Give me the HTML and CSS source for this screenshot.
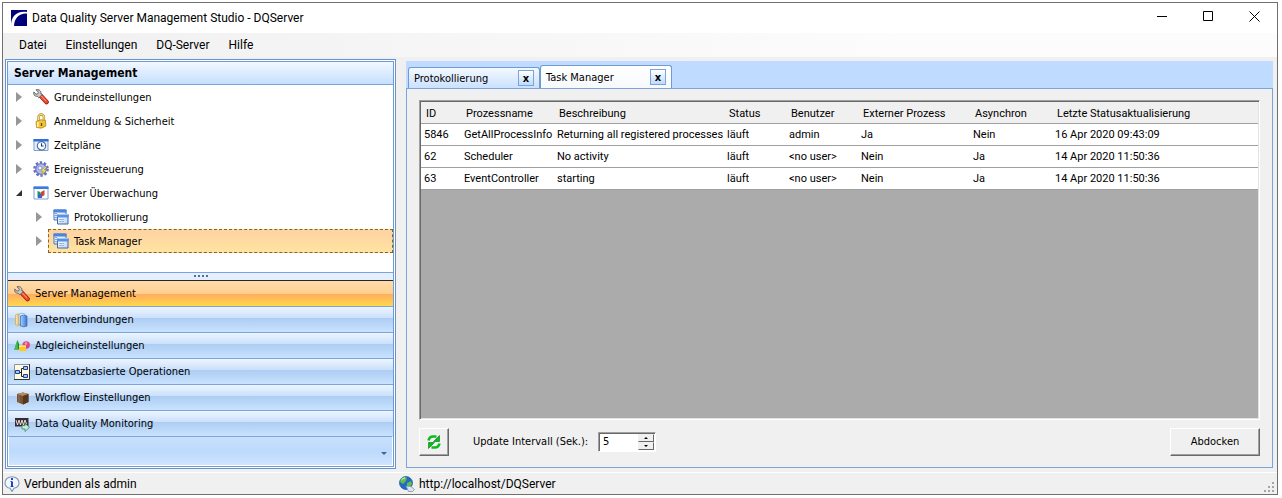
FILE: index.html
```html
<!DOCTYPE html>
<html lang="de">
<head>
    <meta charset="UTF-8">
    <title>Data Quality Server Management Studio - DQServer</title>
    <link rel="stylesheet" href="styles.css">
</head>
<body>
    <svg width="0" height="0" class="defs" aria-hidden="true">
        <defs>
            <linearGradient id="blueBar" x1="0" x2="1" y1="0" y2="0"><stop offset="0" stop-color="#a9cdf8"/><stop offset="1" stop-color="#3b78cf"/></linearGradient>
            <linearGradient id="goldBar" x1="0" x2="1" y1="0" y2="0"><stop offset="0" stop-color="#fff0b0"/><stop offset="1" stop-color="#dba63a"/></linearGradient>
            <linearGradient id="paneFill" x1="0" x2="1" y1="0" y2="1"><stop offset="0" stop-color="#fff"/><stop offset="1" stop-color="#bcd4f6"/></linearGradient>
            <symbol id="i-wrench" viewBox="0 0 16 16">
                <path d="M7.500 6.500l6 6.500" stroke="#8e1c10" stroke-width="4.600" stroke-linecap="round"/>
                <path d="M7.800 6.800l5.600 6" stroke="#ef4a34" stroke-width="3.200" stroke-linecap="round"/>
                <path d="M8 6.500l5 5.400" stroke="#ffa393" stroke-width="1"/>
                <path d="M3 .8l2.400 2.400-.6 1.600-1.800.4L.8 3C.2 5.800 1.800 7.600 4.300 7.300l1.500 1.500 3.200-3-1.200-1.500C8.300 1.800 6 0 3 .8z" fill="#c9c9c9" stroke="#5d5d5d" stroke-width=".9"/>
            </symbol>
            <symbol id="i-lock" viewBox="0 0 16 16">
                <path d="M5.500 8V4.500a2.700 3 0 0 1 5.400 0V8" fill="none" stroke="#b08a24" stroke-width="2.400"/>
                <path d="M5.500 8V4.500a2.700 3 0 0 1 5.400 0V8" fill="none" stroke="#f8e08a" stroke-width="1.100"/>
                <path d="M3 8.500Q8 5.500 12.500 7.500l.3 5.500Q9 16.500 3.500 14.500z" fill="#f0c43a" stroke="#b5861a" stroke-width=".8"/>
                <path d="M4.800 9v5" stroke="#fff0a8" stroke-width="1.600"/>
                <path d="M8.500 10v3" stroke="#6b4a08" stroke-width="1.300"/>
            </symbol>
            <symbol id="i-clock" viewBox="0 0 16 16">
                <path d="M1 2.500h14v11H1z" fill="#e6effc" stroke="#7e9fd4"/>
                <path d="M.5 2h15v2.500H.5z" fill="#2f6fd6"/>
                <circle cx="8.500" cy="8.800" r="4.200" fill="#fff" stroke="#4a6fa5" stroke-width="1.200"/>
                <path d="M8.500 6.200v2.800h2.200" fill="none" stroke="#1d3b70" stroke-width="1.100"/>
            </symbol>
            <symbol id="i-gear" viewBox="0 0 16 16">
                <circle cx="8" cy="8" r="6.500" fill="none" stroke="#6670bd" stroke-width="2.600" stroke-dasharray="2.400 1.684"/>
                <circle cx="8" cy="8" r="5.300" fill="#b4bbf0" stroke="#6d78c8" stroke-width="1.300"/>
                <circle cx="7" cy="7" r="2" fill="#f3f4ff" stroke="#7780c4" stroke-width=".8"/>
                <path d="M12 5.500L8 10.500h2.400L8 15l5.500-6H11l3-3.500z" fill="#ffec4a" stroke="#8a8a48" stroke-width=".5"/>
            </symbol>
            <symbol id="i-monitor" viewBox="0 0 16 16">
                <path d="M1 2h14v12H1z" fill="#fff" stroke="#7e9fd4"/>
                <path d="M.5 1.500h15v2.500H.5z" fill="#3b7ce0"/>
                <path d="M4.500 6l3 1v5.500h-3z" fill="#1f9e52"/><path d="M5 10l4-2.500V13H5z" fill="#2f66cf"/><path d="M8 7l3.500-2v5L8.500 12z" fill="#d8402c"/>
            </symbol>
            <symbol id="i-windows" viewBox="0 0 16 16">
                <path d="M1 1h12v10H1z" fill="url(#paneFill)" stroke="#4676bd"/><path d="M.5.5h13V3.500H.5z" fill="#4c86dc"/>
                <path d="M2 4.500h2M2 6.500h2M2 8.500h2" stroke="#86a5d4"/>
                <path d="M4.500 5.500H15V15H4.500z" fill="url(#paneFill)" stroke="#3d69ad"/><path d="M4 5h11.500v3.500H4z" fill="#5b92e0"/>
                <path d="M4.500 5.500H15" stroke="#a9c9f5"/>
                <path d="M6 10.500h5M6 12.500h5" stroke="#9db8e0"/>
            </symbol>
            <symbol id="i-database" viewBox="0 0 16 16">
                <path d="M1.500 3q2.500-2 5 0v9.500q-2.500 1.800-5 0z" fill="url(#goldBar)" stroke="#c9972e" stroke-width=".6"/>
                <path d="M5 2q3-1.500 6 0v10q-2 1.500-6 0z" fill="#d4e6fc" stroke="#6f9ed8" stroke-width=".6"/>
                <path d="M6.500 4q3-1.600 6.500 0v10q-3 1.600-6.500 0z" fill="url(#blueBar)" stroke="#3568b5" stroke-width=".7"/>
            </symbol>
            <symbol id="i-shapes" viewBox="0 0 16 16">
                <path d="M3.500 2L7 11.500H.3z" fill="#168a2c"/><path d="M3.500 2L4 11.500H.3z" fill="#3cbf55"/>
                <circle cx="12.200" cy="7" r="3.700" fill="#e0457a"/><circle cx="12" cy="5.500" r="1.400" fill="#f58bb0"/>
                <path d="M5 7.500h7V13H5z" fill="#ffc81e"/><path d="M5 7.500h7V9H5z" fill="#ffe680"/>
            </symbol>
            <symbol id="i-tree" viewBox="0 0 16 16">
                <path d="M.5.5h15v15H.5z" fill="#fffbe0" stroke="#8a93a8"/>
                <path d="M15.500 0v15.500H0" fill="none" stroke="#333"/>
                <path d="M5.500 8.500h2M7.500 4.500v8M7.500 4.500h2M7.500 12.500h2" fill="none" stroke="#222"/>
                <path d="M1.500 6.500h4v3h-4zM9.500 2.500h4v3h-4zM9.500 10.500h4v3h-4z" fill="#a9c6f5" stroke="#1f3f94"/>
            </symbol>
            <symbol id="i-box" viewBox="0 0 16 16">
                <path d="M3 4l6-1.500 5.500 1.500v8L9 14.500 3 12z" fill="#7a5234"/>
                <path d="M3 4l6-1.500 5.500 1.500L9 6z" fill="#b58c62"/><path d="M9 6l5.500-2v8L9 14.500z" fill="#553620"/>
                <path d="M5 5v7" stroke="#966c48" stroke-width="1.200"/>
            </symbol>
            <symbol id="i-quality" viewBox="0 0 16 16">
                <path d="M1 2h13.500v8.500H1z" fill="#3a2a2e"/>
                <path d="M2 4l1.500 5L5 4l1.500 5L8 4l1.500 5L11 4l1.500 4" fill="none" stroke="#eee" stroke-width=".9"/>
                <path d="M8 9.500h3V7.500l4.500 3.800-4.500 4.200v-2.500H8z" fill="#c4ead6" stroke="#3e8a62" stroke-width=".8"/>
            </symbol>
            <symbol id="i-info" viewBox="0 0 16 16">
                <path d="M8 .8c4 0 7 2.500 7 5.900 0 3-2.300 5-5 5.600L8 15.500l-2-3.200C3 11.700 1 9.700 1 6.700 1 3.300 4 .8 8 .8z" fill="#f2f7ff" stroke="#8296b4" stroke-width="1.100"/>
                <path d="M8 2v2M8 5.500V10" stroke="#1d49b8" stroke-width="2"/>
                <path d="M6.500 5.500H8M6.500 10.500h3" stroke="#1d49b8"/>
            </symbol>
            <symbol id="i-globe" viewBox="0 0 16 16">
                <circle cx="7" cy="7" r="6.500" fill="#2468c8" stroke="#173f80" stroke-width=".6"/>
                <path d="M2 3q3-3 6-1.500L7 5 4 8 1 6zM8 7l4-2 1 3-3 4-2-2z" fill="#5cc04a"/>
                <path d="M2.500 4q1.500-2 3.500-2" stroke="#d8f0ff" fill="none"/>
                <path d="M7 10l5 .5 3.500 3-2 2H9.500z" fill="#dbe6f2" stroke="#7991ad" stroke-width=".8"/>
            </symbol>
            <symbol id="i-refresh" viewBox="0 0 16 16">
                <path d="M2.500 6.500Q3.500 2.500 7 2.500h3.500" fill="none" stroke="#0bbd1c" stroke-width="2.600"/>
                <path d="M13.500 1.500v6H7.500z" fill="#0bbd1c" stroke="#087010" stroke-width=".6"/>
                <path d="M13.500 9.500q-1 4-4.500 4H5.500" fill="none" stroke="#0bbd1c" stroke-width="2.600"/>
                <path d="M2.500 14.500v-6h6z" fill="#0bbd1c" stroke="#087010" stroke-width=".6"/>
            </symbol>
        </defs>
    </svg>

    <div class="window">
        <header class="titlebar">
            <svg class="app-icon" viewBox="0 0 16 16"><path fill="#00007b" d="M0 0h16v16H0z"/><path d="M0 16C0 6 6 .5 16 2v1.500C8 3 3.500 8 3 16z" fill="#fff"/></svg>
            <h1>Data Quality Server Management Studio - DQServer</h1>
            <div class="window-buttons">
                <button type="button" aria-label="Minimieren"><svg viewBox="0 0 11 11"><path d="M0 5.500h10"/></svg></button>
                <button type="button" aria-label="Maximieren"><svg viewBox="0 0 11 11"><path d="M.5.5h9v9h-9z"/></svg></button>
                <button type="button" aria-label="Schließen"><svg viewBox="0 0 11 11"><path d="M.5.5l10 10M10.500.5l-10 10"/></svg></button>
            </div>
        </header>

        <nav class="menubar">
            <button type="button">Datei</button>
            <button type="button">Einstellungen</button>
            <button type="button">DQ-Server</button>
            <button type="button">Hilfe</button>
        </nav>

        <main class="content">
            <aside class="sidebar">
                <div class="sidebar-inner">
                    <h2>Server Management</h2>
                    <ul class="tree">
                        <li><span class="arrow"></span><a href="#"><svg class="icon"><use href="#i-wrench"/></svg>Grundeinstellungen</a></li>
                        <li><span class="arrow"></span><a href="#"><svg class="icon"><use href="#i-lock"/></svg>Anmeldung &amp; Sicherheit</a></li>
                        <li><span class="arrow"></span><a href="#"><svg class="icon"><use href="#i-clock"/></svg>Zeitpläne</a></li>
                        <li><span class="arrow"></span><a href="#"><svg class="icon"><use href="#i-gear"/></svg>Ereignissteuerung</a></li>
                        <li><span class="arrow open"></span><a href="#"><svg class="icon"><use href="#i-monitor"/></svg>Server Überwachung</a></li>
                        <li class="child"><span class="arrow"></span><a href="#"><svg class="icon"><use href="#i-windows"/></svg>Protokollierung</a></li>
                        <li class="child"><span class="arrow"></span><a href="#" class="selected"><svg class="icon"><use href="#i-windows"/></svg>Task Manager</a></li>
                    </ul>
                    <div class="splitter"><i></i><i></i><i></i><i></i></div>
                    <div class="sections">
                        <button type="button" class="active"><svg class="icon"><use href="#i-wrench"/></svg>Server Management</button>
                        <button type="button"><svg class="icon"><use href="#i-database"/></svg>Datenverbindungen</button>
                        <button type="button"><svg class="icon"><use href="#i-shapes"/></svg>Abgleicheinstellungen</button>
                        <button type="button"><svg class="icon"><use href="#i-tree"/></svg>Datensatzbasierte Operationen</button>
                        <button type="button"><svg class="icon"><use href="#i-box"/></svg>Workflow Einstellungen</button>
                        <button type="button"><svg class="icon"><use href="#i-quality"/></svg>Data Quality Monitoring</button>
                    </div>
                    <div class="overflow">
                        <button type="button" aria-label="Weitere Schaltflächen"></button>
                    </div>
                </div>
            </aside>

            <section class="workspace">
                <div class="tabs">
                    <div class="tab"><a href="#">Protokollierung</a><button type="button" aria-label="Protokollierung schließen">x</button></div>
                    <div class="tab current"><a href="#">Task Manager</a><button type="button" aria-label="Task Manager schließen">x</button></div>
                </div>
                <div class="page">
                    <div class="grid">
                        <table>
                            <colgroup>
                                <col class="c-id"><col class="c-name"><col class="c-text"><col class="c-status"><col class="c-user"><col class="c-extern"><col class="c-async"><col>
                            </colgroup>
                            <thead>
                                <tr><th>ID</th><th>Prozessname</th><th>Beschreibung</th><th>Status</th><th>Benutzer</th><th>Externer Prozess</th><th>Asynchron</th><th>Letzte Statusaktualisierung</th></tr>
                            </thead>
                            <tbody>
                                <tr><td>5846</td><td>GetAllProcessInfo</td><td>Returning all registered processes</td><td>läuft</td><td>admin</td><td>Ja</td><td>Nein</td><td>16 Apr 2020 09:43:09</td></tr>
                                <tr><td>62</td><td>Scheduler</td><td>No activity</td><td>läuft</td><td>&lt;no user&gt;</td><td>Nein</td><td>Ja</td><td>14 Apr 2020 11:50:36</td></tr>
                                <tr><td>63</td><td>EventController</td><td>starting</td><td>läuft</td><td>&lt;no user&gt;</td><td>Nein</td><td>Ja</td><td>14 Apr 2020 11:50:36</td></tr>
                            </tbody>
                        </table>
                    </div>
                    <div class="toolbar">
                        <button type="button" class="raised refresh" aria-label="Aktualisieren"><svg class="icon"><use href="#i-refresh"/></svg></button>
                        <label for="interval">Update Intervall (Sek.):</label>
                        <div class="spinner">
                            <input type="text" id="interval" inputmode="numeric" value="5">
                            <div class="steps">
                                <button type="button" class="up" aria-label="Erhöhen"></button>
                                <button type="button" class="down" aria-label="Verringern"></button>
                            </div>
                        </div>
                        <button type="button" class="raised undock">Abdocken</button>
                    </div>
                </div>
            </section>
        </main>

        <footer class="statusbar">
            <div class="user"><svg class="icon"><use href="#i-info"/></svg>Verbunden als admin</div>
            <div class="host"><svg class="icon"><use href="#i-globe"/></svg>http://localhost/DQServer</div>
            <svg class="grip" viewBox="0 0 11 11"><path fill="#a5a5a5" d="M8 0h2v2H8zM4 4h2v2H4zM8 4h2v2H8zM0 8h2v2H0zM4 8h2v2H4zM8 8h2v2H8z"/></svg>
        </footer>
    </div>

    <script>
        const interval = document.getElementById('interval');

        function step(delta) {
            interval.value = Math.max(1, Number(interval.value) + delta);
        }

        document.querySelector('.up').addEventListener('click', () => step(1));
        document.querySelector('.down').addEventListener('click', () => step(-1));
    </script>
</body>
</html>
```

FILE: styles.css
```css
* {
    box-sizing: border-box;
}
body {
    margin: 0;
    padding: 2px 4px 3px 2px;
    height: 100vh;
    background: #fff;
    color: #000;
    font: 11px "DejaVu Sans Condensed", "DejaVu Sans", sans-serif;
}
.defs {
    position: absolute;
}
button {
    font: inherit;
    color: inherit;
    padding: 0;
    border: none;
    background: none;
}
a {
    color: inherit;
    text-decoration: none;
}
.icon {
    width: 16px;
    height: 16px;
    flex: none;
}
.window {
    display: flex;
    flex-direction: column;
    height: 100%;
    border: 1px solid #707070;
    background: #f0f0f0;
}

/* title and menu */
.titlebar {
    display: flex;
    align-items: center;
    height: 30px;
    padding-left: 8px;
    background: #fff;
}
.titlebar h1 {
    margin: 0 0 0 5px;
    font: 12px Roboto, sans-serif;
}
.app-icon {
    width: 16px;
    height: 16px;
}
.window-buttons {
    display: flex;
    margin-left: auto;
}
.window-buttons button {
    width: 46px;
    height: 30px;
}
.window-buttons svg {
    width: 11px;
    height: 11px;
    fill: none;
    stroke: #000;
}
.menubar {
    display: flex;
    gap: 19px;
    height: 24px;
    padding-left: 16px;
    background: linear-gradient(to right, #f0f0f0, #fcfcfc 70%);
    font: 12px Roboto, sans-serif;
}

.content {
    display: flex;
    flex: 1;
    gap: 10px;
    min-height: 0;
    padding: 2px 4px 3px 2px;
}

/* left side */
.sidebar {
    flex: none;
    width: 391px;
    padding: 1px;
    border: 1px solid #6593cf;
    background: #fff;
}
.sidebar-inner {
    display: flex;
    flex-direction: column;
    height: 100%;
    border: 1px solid #6f9bd3;
}
.sidebar h2 {
    margin: 0;
    padding-left: 6px;
    height: 23px;
    border-bottom: 1px solid #7ba4da;
    background: linear-gradient(#f2f8ff, #c5dffe);
    font-size: 12px;
    line-height: 22px;
}
.tree {
    flex: 1;
    margin: 0;
    padding: 0;
    list-style: none;
}
.tree li {
    display: flex;
    align-items: center;
    height: 24px;
    padding-left: 8px;
}
.tree .child {
    padding-left: 28px;
}
.tree a {
    display: flex;
    flex: 1;
    align-items: center;
    gap: 5px;
    height: 24px;
    margin-left: 6px;
    padding-left: 4px;
    border: 1px solid transparent;
}
.tree .selected {
    border: 1px dashed #8a6414;
    background: linear-gradient(#ffd2a4, #ffe3a0);
}
.arrow {
    border-left: 6px solid #979797;
    border-top: 5px solid transparent;
    border-bottom: 5px solid transparent;
}
.arrow.open {
    border: none;
    border-left: 6px solid transparent;
    border-bottom: 6px solid #333;
}
.splitter {
    display: flex;
    justify-content: center;
    gap: 2px;
    height: 8px;
    padding-top: 2px;
    border-top: 1px solid #7ba4da;
    background: #e3efff;
}
.splitter i {
    width: 2px;
    height: 2px;
    background: #53709c;
}
.sections button {
    display: flex;
    align-items: center;
    gap: 5px;
    width: 100%;
    height: 26px;
    padding-left: 6px;
    border-top: 1px solid #7ba4da;
    background: linear-gradient(#edf5ff, #c9dffb 46%, #adcdf3 46%, #c9e3ff);
}
.sections .active {
    border-top-color: #262626;
    background: linear-gradient(#ffdcaa, #ffce8e 54%, #ffae5c 54%, #ffd84c);
}
.overflow {
    display: flex;
    justify-content: flex-end;
    height: 30px;
    border: 1px solid #fff;
    border-top: 1px solid #7ba4da;
    background: linear-gradient(#c9e0fd, #bddafc 50%, #cfe4ff);
}
.overflow button {
    width: 16px;
}
.overflow button::after {
    content: "";
    display: inline-block;
    border: 3px solid transparent;
    border-top-color: #3765a8;
    border-bottom: none;
}

/* right side */
.workspace {
    display: flex;
    flex: 1;
    flex-direction: column;
    min-width: 0;
    padding: 2px 0 1px;
}
.tabs {
    display: flex;
    align-items: flex-end;
    height: 27px;
    padding-left: 2px;
    background: #bfdbff;
}
.tab {
    display: flex;
    align-items: center;
    justify-content: space-between;
    width: 132px;
    height: 21px;
    padding: 0 5px;
    border: 1px solid #6f9bd3;
    border-bottom: none;
    border-radius: 3px 3px 0 0;
    background: linear-gradient(#f4f9ff, #cbe1ff);
}
.tab.current {
    height: 23px;
    background: linear-gradient(#fff, #f6f9fd);
}
.tab button {
    width: 16px;
    height: 16px;
    border: 1px solid #7ba4da;
    background: linear-gradient(#fff, #bddaff);
    font-weight: bold;
    line-height: 13px;
}
.page {
    display: flex;
    flex: 1;
    flex-direction: column;
    min-height: 0;
    padding: 11px 12px;
    border: 1px solid #7ba4da;
}
.grid {
    flex: 1;
    min-height: 0;
    padding: 1px 1px 0 1px;
    border: 1px solid;
    border-color: #a0a0a0 #fff #fff #a0a0a0;
    background: #ababab;
    box-shadow: inset 1px 1px #696969, inset -1px -1px #e3e3e3;
}
table {
    width: 100%;
    border-collapse: collapse;
    table-layout: fixed;
    font-family: Roboto, sans-serif;
}
th, td {
    height: 22px;
    padding: 0 0 0 3px;
    border-bottom: 1px solid #a0a0a0;
    background: #fff;
    font-weight: normal;
    text-align: left;
    white-space: nowrap;
}
th {
    height: 21px;
    padding: 2px 0 0 5px;
    background: #f0f0f0;
}
.c-id {
    width: 40px;
}
.c-name {
    width: 93px;
}
.c-text {
    width: 170px;
}
.c-status {
    width: 62px;
}
.c-user {
    width: 72px;
}
.c-extern {
    width: 112px;
}
.c-async {
    width: 82px;
}
.toolbar {
    display: flex;
    align-items: center;
    margin-top: 7px;
    height: 29px;
}
.raised {
    height: 28px;
    border: 1px solid;
    border-color: #fff #696969 #696969 #fff;
    box-shadow: inset -1px -1px #a0a0a0;
}
.refresh {
    display: flex;
    align-items: center;
    justify-content: center;
    width: 30px;
}
.toolbar label {
    margin: 0 10px 0 24px;
}
.spinner {
    display: flex;
    width: 58px;
    height: 20px;
    padding: 1px;
    border: 1px solid;
    border-color: #a0a0a0 #fff #fff #a0a0a0;
    background: #fff;
    box-shadow: inset 1px 1px #696969;
}
.spinner input {
    flex: 1;
    min-width: 0;
    padding: 0 3px;
    border: none;
    background: none;
    font: inherit;
}
.steps {
    display: flex;
    flex-direction: column;
    width: 16px;
}
.steps button {
    display: flex;
    flex: 1;
    align-items: center;
    justify-content: center;
    border: 1px solid;
    border-color: #f0f0f0 #696969 #696969 #f0f0f0;
    background: #f0f0f0;
}
.steps button::after {
    content: "";
    border: 2px solid transparent;
}
.steps .up::after {
    border-top: none;
    border-bottom-color: #000;
}
.steps .down::after {
    border-bottom: none;
    border-top-color: #000;
}
.undock {
    width: 90px;
    margin-left: auto;
}

.statusbar {
    display: flex;
    align-items: center;
    height: 22px;
    padding-left: 1px;
    border-top: 1px solid #fff;
    font: 12px Roboto, sans-serif;
}
.statusbar div {
    display: flex;
    align-items: center;
    gap: 4px;
}
.statusbar .user {
    width: 395px;
}
.grip {
    width: 11px;
    height: 11px;
    margin: 7px 2px 0 auto;
}
```
